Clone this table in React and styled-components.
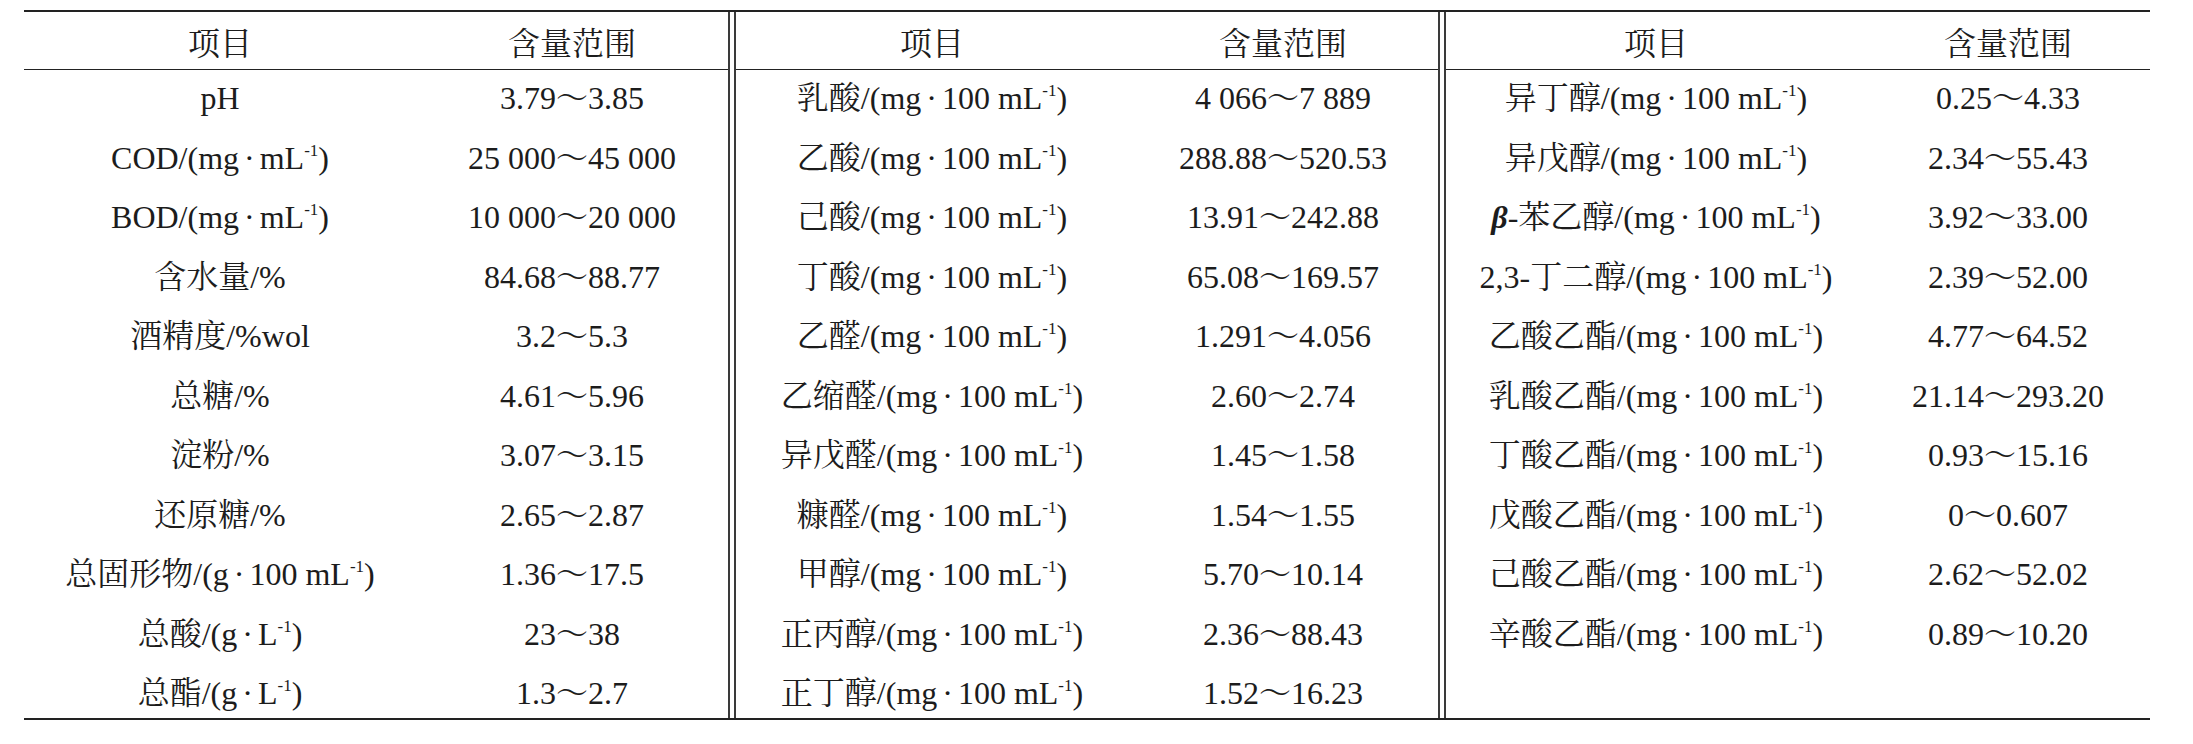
import React from 'react';
import styled, { createGlobalStyle } from 'styled-components';

const GlobalStyle = createGlobalStyle`
  html, body {
    margin: 0;
    padding: 0;
    background: #fff;
  }
  body {
    font-family: "Liberation Serif", "Noto Serif CJK SC", "Noto Sans CJK SC", serif;
    color: #1c1c1c;
  }
`;

const sections = [
  {
    first: 392,
    rows: [
      { name: 'pH', range: '3.79～3.85' },
      { name: 'COD', unit: 'mgmL', range: '25 000～45 000' },
      { name: 'BOD', unit: 'mgmL', range: '10 000～20 000' },
      { name: '含水量/%', range: '84.68～88.77' },
      { name: '酒精度/%wol', range: '3.2～5.3' },
      { name: '总糖/%', range: '4.61～5.96' },
      { name: '淀粉/%', range: '3.07～3.15' },
      { name: '还原糖/%', range: '2.65～2.87' },
      { name: '总固形物', unit: 'g100', range: '1.36～17.5' },
      { name: '总酸', unit: 'gL', range: '23～38' },
      { name: '总酯', unit: 'gL', range: '1.3～2.7' },
    ],
  },
  {
    first: 392,
    rows: [
      { name: '乳酸', unit: 'mg100', range: '4 066～7 889' },
      { name: '乙酸', unit: 'mg100', range: '288.88～520.53' },
      { name: '己酸', unit: 'mg100', range: '13.91～242.88' },
      { name: '丁酸', unit: 'mg100', range: '65.08～169.57' },
      { name: '乙醛', unit: 'mg100', range: '1.291～4.056' },
      { name: '乙缩醛', unit: 'mg100', range: '2.60～2.74' },
      { name: '异戊醛', unit: 'mg100', range: '1.45～1.58' },
      { name: '糠醛', unit: 'mg100', range: '1.54～1.55' },
      { name: '甲醇', unit: 'mg100', range: '5.70～10.14' },
      { name: '正丙醇', unit: 'mg100', range: '2.36～88.43' },
      { name: '正丁醇', unit: 'mg100', range: '1.52～16.23' },
    ],
  },
  {
    first: 420,
    rows: [
      { name: '异丁醇', unit: 'mg100', range: '0.25～4.33' },
      { name: '异戊醇', unit: 'mg100', range: '2.34～55.43' },
      { name: '-苯乙醇', beta: true, unit: 'mg100', range: '3.92～33.00' },
      { name: '2,3-丁二醇', unit: 'mg100', range: '2.39～52.00' },
      { name: '乙酸乙酯', unit: 'mg100', range: '4.77～64.52' },
      { name: '乳酸乙酯', unit: 'mg100', range: '21.14～293.20' },
      { name: '丁酸乙酯', unit: 'mg100', range: '0.93～15.16' },
      { name: '戊酸乙酯', unit: 'mg100', range: '0～0.607' },
      { name: '己酸乙酯', unit: 'mg100', range: '2.62～52.02' },
      { name: '辛酸乙酯', unit: 'mg100', range: '0.89～10.20' },
      { name: '', range: '' },
    ],
  },
];

const Page = styled.div`
  padding: 10px 0 0 24px;
`;

const Table = styled.div`
  display: flex;
  width: 2126px;
  column-gap: 4px;
  border-top: 2px solid #222;
  border-bottom: 2px solid #222;
`;

const Section = styled.div`
  box-sizing: border-box;
  flex: 0 0 706px;
  display: grid;
  grid-template-columns: ${(p) => p.$first}px 1fr;
  grid-template-rows: 58px repeat(10, 59.5px) 53px;
  border-left: ${(p) => (p.$left ? '2px solid #3a3a3a' : 'none')};
  border-right: ${(p) => (p.$right ? '2px solid #3a3a3a' : 'none')};
`;

const HeadCell = styled.div`
  display: flex;
  align-items: center;
  justify-content: center;
  font-size: 32px;
  border-bottom: 1px solid #222;
`;

const Cell = styled.div`
  box-sizing: border-box;
  padding-top: 8px;
  font-size: 32px;
  line-height: 40px;
  text-align: center;
  white-space: nowrap;
`;

const Dot = styled.span`
  margin: 0 5px;
`;

const Sup = styled.sup`
  font-size: 17px;
  line-height: 0;
  vertical-align: 13px;
`;

const Beta = styled.i`
  font-weight: bold;
`;

const units = {
  mg100: ['mg', '100 mL'],
  mgmL: ['mg', 'mL'],
  g100: ['g', '100 mL'],
  gL: ['g', 'L'],
};

const Label = ({ row }) => {
  const unit = units[row.unit];
  return (
    <>
      {row.beta && <Beta>β</Beta>}
      {row.name}
      {unit && (
        <>
          /({unit[0]}
          <Dot>·</Dot>
          {unit[1]}
          <Sup>-1</Sup>)
        </>
      )}
    </>
  );
};

export default function App() {
  return (
    <Page>
      <GlobalStyle />
      <Table>
        {sections.map((s, i) => (
          <Section
            key={i}
            $first={s.first}
            $left={i > 0}
            $right={i < sections.length - 1}
          >
            <HeadCell>项目</HeadCell>
            <HeadCell>含量范围</HeadCell>
            {s.rows.map((row, j) => (
              <React.Fragment key={j}>
                <Cell>
                  <Label row={row} />
                </Cell>
                <Cell>{row.range}</Cell>
              </React.Fragment>
            ))}
          </Section>
        ))}
      </Table>
    </Page>
  );
}
